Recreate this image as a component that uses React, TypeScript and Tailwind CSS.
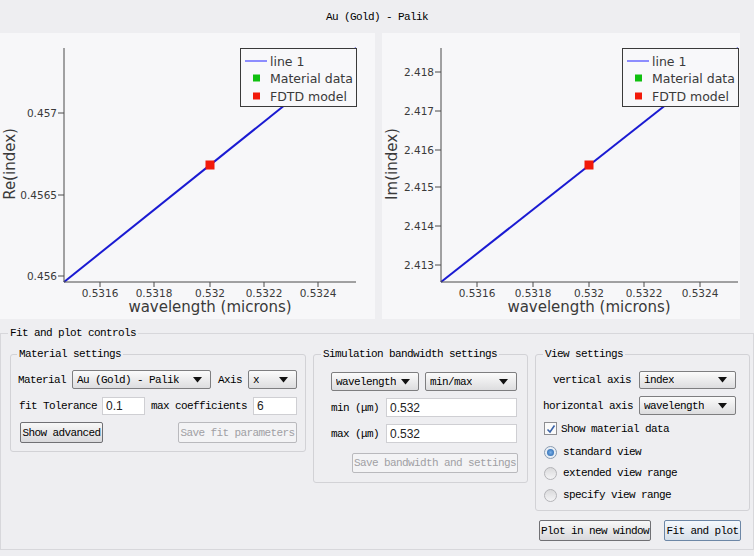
import React from "react";

type Tick = [number, string];

function Plot(props: {
  ox: number;
  w: number;
  axisX: number;
  axisRight: number;
  yTicks: Tick[];
  xTicks: Tick[];
  marker: [number, number];
  lineEnd: [number, number];
  legendX: number;
  label: string;
  labelX: number;
  xLabelX: number;
}) {
  const { ox, w, axisX, axisRight, yTicks, xTicks, marker, lineEnd, legendX, label, labelX, xLabelX } = props;
  const base = 282;
  return (
    <svg
      width={w}
      height={286}
      viewBox={`${ox} 33 ${w} 286`}
      className="block font-['DejaVu_Sans','Liberation_Sans',sans-serif] tracking-normal"
    >
      <line x1={axisX} y1={base} x2={lineEnd[0]} y2={lineEnd[1]} stroke="#1a1ad2" strokeWidth={2} />
      <rect x={marker[0] - 4.5} y={marker[1] - 4.5} width={9} height={9} fill="#f21a0a" />
      <path d={`M${axisX} 48V${base}H${axisRight}`} fill="none" stroke="#4a4a4a" strokeWidth={1} />
      {yTicks.map(([y, t]) => (
        <g key={t}>
          <line x1={axisX - 6} y1={y} x2={axisX} y2={y} stroke="#4a4a4a" />
          <text x={axisX - 7} y={y} fontSize={10.5} fill="#3a3a3a" textAnchor="end" dominantBaseline="central">
            {t}
          </text>
        </g>
      ))}
      {xTicks.map(([x, t]) => (
        <g key={t}>
          <line x1={x} y1={base} x2={x} y2={base + 5} stroke="#4a4a4a" />
          <text x={x} y={293} fontSize={10.5} fill="#3a3a3a" textAnchor="middle" dominantBaseline="central">
            {t}
          </text>
        </g>
      ))}
      <text x={xLabelX} y={307} fontSize={15} fill="#3a3a3a" textAnchor="middle" dominantBaseline="central">
        wavelength (microns)
      </text>
      <text
        x={labelX}
        y={164}
        fontSize={15}
        fill="#3a3a3a"
        textAnchor="middle"
        dominantBaseline="central"
        transform={`rotate(-90 ${labelX} 164)`}
      >
        {label}
      </text>
      <rect x={legendX + 0.5} y={48.5} width={116} height={58} fill="#f8f8fa" stroke="#3a3a3a" strokeWidth={1} />
      <line x1={legendX + 5} y1={61} x2={legendX + 27} y2={61} stroke="#6a6aff" strokeWidth={1.5} />
      <rect x={legendX + 13} y={74.5} width={7} height={7} fill="#10c010" />
      <rect x={legendX + 13} y={92.5} width={7} height={7} fill="#f21a0a" />
      <text x={legendX + 30} y={61} fontSize={12.5} fill="#3a3a3a" dominantBaseline="central">
        line 1
      </text>
      <text x={legendX + 30} y={78} fontSize={12.5} fill="#3a3a3a" dominantBaseline="central">
        Material data
      </text>
      <text x={legendX + 30} y={96} fontSize={12.5} fill="#3a3a3a" dominantBaseline="central">
        FDTD model
      </text>
    </svg>
  );
}

function Arrow() {
  return (
    <svg width="9" height="6" viewBox="0 0 9 6" className="shrink-0">
      <path d="M0 0H9L4.5 5.5Z" fill="#111" />
    </svg>
  );
}

function Combo({ text, className }: { text: string; className: string }) {
  return (
    <div
      className={`flex items-center justify-between border border-[#7e7e80] rounded-[2px] bg-linear-to-b from-[#fbfbfb] to-[#dddddf] pl-[4px] pr-[8px] ${className}`}
    >
      <span className="truncate">{text}</span>
      <Arrow />
    </div>
  );
}

function Input({ value, className }: { value: string; className: string }) {
  return (
    <div
      className={`flex items-center border border-[#cfcfd3] bg-white pl-[3px] font-['Liberation_Sans',sans-serif] tracking-normal text-[12px] text-[#222] ${className}`}
    >
      {value}
    </div>
  );
}

function Btn({ text, className, disabled }: { text: string; className: string; disabled?: boolean }) {
  return (
    <div
      className={`flex items-center justify-center rounded-[2px] border ${
        disabled
          ? "border-[#b9b9bd] bg-[#f3f3f5] text-[#a0a0a4]"
          : "border-[#707074] bg-linear-to-b from-[#f8f8f8] to-[#d9d9dc] text-black"
      } ${className}`}
    >
      {text}
    </div>
  );
}

function Radio({ checked }: { checked?: boolean }) {
  return checked ? (
    <div className="w-[13px] h-[13px] rounded-full border border-[#8a9bb0] bg-[#e8eef5] flex items-center justify-center">
      <div className="w-[7px] h-[7px] rounded-full bg-radial from-[#7ab0e8] to-[#1d5fa8]" />
    </div>
  ) : (
    <div className="w-[13px] h-[13px] rounded-full border border-[#b4b4b8] bg-linear-to-b from-[#dadadc] to-[#f4f4f6]" />
  );
}

export default function App() {
  return (
    <div className="w-[754px] h-[556px] overflow-hidden whitespace-nowrap bg-[#eeeef1] flex flex-col font-['Liberation_Mono','Courier_New',monospace] text-[11px] tracking-[-0.6px] text-black leading-[12px]">
      <div className="h-[33px] flex items-center justify-center shrink-0">Au (Gold) - Palik</div>
      <div className="flex h-[286px] shrink-0">
        <div className="w-[375px] bg-[#f7f7f9]">
          <Plot
            ox={0}
            w={375}
            axisX={64}
            axisRight={356}
            yTicks={[
              [113, "0.457"],
              [195, "0.4565"],
              [276, "0.456"],
            ]}
            xTicks={[
              [100, "0.5316"],
              [154, "0.5318"],
              [210, "0.532"],
              [264, "0.5322"],
              [318, "0.5324"],
            ]}
            marker={[210, 165]}
            lineEnd={[356, 48]}
            legendX={240}
            label="Re(index)"
            labelX={10}
            xLabelX={210}
          />
        </div>
        <div className="ml-[7px] w-[358px] bg-[#f7f7f9]">
          <Plot
            ox={382}
            w={358}
            axisX={441}
            axisRight={738}
            yTicks={[
              [72, "2.418"],
              [111, "2.417"],
              [150, "2.416"],
              [187, "2.415"],
              [226, "2.414"],
              [265, "2.413"],
            ]}
            xTicks={[
              [477, "0.5316"],
              [533, "0.5318"],
              [589, "0.532"],
              [644, "0.5322"],
              [700, "0.5324"],
            ]}
            marker={[589, 165]}
            lineEnd={[738, 48]}
            legendX={622}
            label="Im(index)"
            labelX={392}
            xLabelX={589}
          />
        </div>
      </div>

      <fieldset className="mt-[8px] h-[223px] border border-[#d7d7db] shrink-0">
        <legend className="ml-[7px] px-[2px] leading-[12px]">Fit and plot controls</legend>
        <div className="flex items-start pl-[9px] pt-[9px]">
          {/* Material settings */}
          <fieldset className="w-[296px] border border-[#d2d2d6] rounded-[3px] px-[7px] pb-[8px]">
            <legend className="ml-[-1px] px-[2px] leading-[12px]">Material settings</legend>
            <div className="mt-[10px] flex items-center h-[19px]">
              <span>Material</span>
              <Combo text="Au (Gold) - Palik" className="ml-[6px] w-[139px] h-[19px]" />
              <span className="ml-[7px]">Axis</span>
              <Combo text="x" className="ml-[6px] w-[49px] h-[19px]" />
            </div>
            <div className="mt-[8px] flex items-center h-[18px] pl-[1px]">
              <span>fit Tolerance</span>
              <Input value="0.1" className="ml-[5px] w-[43px] h-[18px]" />
              <span className="ml-[6px]">max coefficients</span>
              <Input value="6" className="ml-[6px] w-[44px] h-[18px]" />
            </div>
            <div className="mt-[7px] flex items-center justify-between h-[21px] pl-[2px] pr-[1px]">
              <Btn text="Show advanced" className="w-[83px] h-[21px]" />
              <Btn text="Save fit parameters" className="w-[119px] h-[21px]" disabled />
            </div>
          </fieldset>

          {/* Simulation bandwidth */}
          <fieldset className="ml-[7px] w-[215px] border border-[#d2d2d6] rounded-[3px] pl-[17px] pb-[9px]">
            <legend className="ml-[-10px] px-[2px] leading-[12px]">Simulation bandwidth settings</legend>
            <div className="mt-[12px] flex items-center h-[19px]">
              <Combo text="wavelength" className="w-[88px] h-[19px]" />
              <Combo text="min/max" className="ml-[6px] w-[92px] h-[19px]" />
            </div>
            <div className="mt-[7px] flex items-center h-[19px]">
              <span className="w-[55px]">min (μm)</span>
              <Input value="0.532" className="w-[131px] h-[19px]" />
            </div>
            <div className="mt-[7px] flex items-center h-[19px]">
              <span className="w-[55px]">max (μm)</span>
              <Input value="0.532" className="w-[131px] h-[19px]" />
            </div>
            <div className="mt-[10px] flex h-[20px]">
              <Btn text="Save bandwidth and settings" className="ml-[21px] w-[166px] h-[20px]" disabled />
            </div>
          </fieldset>

          {/* View settings */}
          <div className="ml-[7px] w-[215px] flex flex-col">
            <fieldset className="border border-[#d2d2d6] rounded-[3px] px-[7px] pb-[8px]">
              <legend className="ml-[0px] px-[2px] leading-[12px]">View settings</legend>
              <div className="mt-[11px] flex items-center h-[18px]">
                <span className="w-[90px] text-right pr-[2px]">vertical axis</span>
                <Combo text="index" className="ml-[6px] w-[97px] h-[18px]" />
              </div>
              <div className="mt-[7px] flex items-center h-[19px]">
                <span className="w-[90px]">horizontal axis</span>
                <Combo text="wavelength" className="ml-[6px] w-[97px] h-[19px]" />
              </div>
              <div className="mt-[7px] flex items-center h-[13px]">
                <div className="ml-[1px] w-[13px] h-[13px] border border-[#8e8e92] bg-[#fafafa] flex items-center justify-center">
                  <svg width="10" height="10" viewBox="0 0 10 10">
                    <path d="M1.5 5.5L4 8L8.5 1.5" fill="none" stroke="#3b63a8" strokeWidth={1.6} />
                  </svg>
                </div>
                <span className="ml-[4px]">Show material data</span>
              </div>
              <div className="mt-[10px] flex items-center h-[14px]">
                <div className="ml-[1px]">
                  <Radio checked />
                </div>
                <span className="ml-[6px]">standard view</span>
              </div>
              <div className="mt-[7px] flex items-center h-[14px]">
                <div className="ml-[1px]">
                  <Radio />
                </div>
                <span className="ml-[6px]">extended view range</span>
              </div>
              <div className="mt-[8px] flex items-center h-[14px]">
                <div className="ml-[1px]">
                  <Radio />
                </div>
                <span className="ml-[6px]">specify view range</span>
              </div>
            </fieldset>
            <div className="mt-[9px] flex h-[21px]">
              <Btn text="Plot in new window" className="ml-[4px] w-[112px] h-[21px]" />
              <div className="ml-[13px] w-[77px] h-[21px] flex items-center justify-center rounded-[2px] border border-[#6d87a6] bg-linear-to-b from-[#f4f8fc] to-[#d6e0ea]">
                Fit and plot
              </div>
            </div>
          </div>
        </div>
      </fieldset>
    </div>
  );
}
